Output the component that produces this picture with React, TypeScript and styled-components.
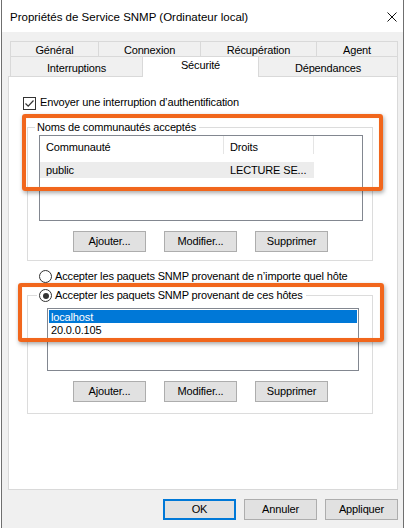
import React from "react";
import styled, { createGlobalStyle } from "styled-components";

const GlobalStyle = createGlobalStyle`
  html, body {
    margin: 0;
    padding: 0;
    background: #ffffff;
  }
  body {
    font-family: "Liberation Sans", Arial, sans-serif;
    font-size: 11px;
    letter-spacing: -0.15px;
    color: #000000;
  }
  *, *::before, *::after {
    box-sizing: border-box;
  }
`;

const Screen = styled.div`
  position: relative;
  width: 407px;
  height: 528px;
  overflow: hidden;
  background: #ffffff;
`;

const Window = styled.div`
  margin-left: 1px;
  width: 403px;
  height: 528px;
  border-left: 1px solid #6f6f6f;
  border-right: 1px solid #6f6f6f;
  background: #f0f0f0;
  display: flex;
  flex-direction: column;
`;

const TitleBar = styled.div`
  height: 32px;
  flex: none;
  background: #ffffff;
  display: flex;
  align-items: center;
  padding: 2px 6px 0 8px;
`;

const TitleText = styled.span`
  font-size: 11.5px;
  letter-spacing: 0;
  line-height: 14px;
  white-space: nowrap;
`;

const CloseButton = styled.span`
  margin-left: auto;
  width: 10px;
  height: 10px;
  display: flex;
  margin-top: -1px;
`;

const Body = styled.div`
  flex: 1;
  display: flex;
  flex-direction: column;
  padding: 9px 5px 0 6px;
`;

const TabStrip = styled.div`
  display: flex;
  flex-direction: column;
  margin-left: 2px;
`;

const TabRow = styled.div<{ $h: number }>`
  display: flex;
  align-items: flex-start;
  height: ${(p) => p.$h}px;
`;

const Tab = styled.div<{ $w: number; $h: number; $pt: number; $active?: boolean }>`
  position: relative;
  z-index: ${(p) => (p.$active ? 2 : 1)};
  width: ${(p) => p.$w}px;
  height: ${(p) => p.$h}px;
  padding-top: ${(p) => p.$pt}px;
  margin-left: -1px;
  border: 1px solid #d9d9d9;
  border-bottom: none;
  background: ${(p) => (p.$active ? "#ffffff" : "#f0f0f0")};
  text-align: center;
  line-height: 13px;
  white-space: nowrap;

  &:first-child {
    margin-left: 0;
  }
`;

const Panel = styled.div`
  height: 414px;
  border: 1px solid #d9d9d9;
  background: #ffffff;
  display: flex;
  flex-direction: column;
  align-items: flex-start;
`;

const CheckRow = styled.label`
  display: flex;
  align-items: center;
  gap: 4px;
  height: 13px;
  margin: 19px 0 0 14px;
  line-height: 13px;
  white-space: nowrap;
`;

const CheckBox = styled.span`
  width: 13px;
  height: 13px;
  border: 1px solid #333333;
  background: #ffffff;
  display: flex;
  align-items: center;
  justify-content: center;
  margin-top: 1px;
`;

const RadioRow = styled.label<{ $mt?: number; $ml?: number }>`
  display: flex;
  align-items: center;
  gap: 3px;
  height: 13px;
  margin: ${(p) => p.$mt ?? 0}px 0 0 ${(p) => p.$ml ?? 0}px;
  line-height: 13px;
  white-space: nowrap;
`;

const Radio = styled.span<{ $checked?: boolean }>`
  position: relative;
  width: 13px;
  height: 13px;
  border: 1px solid #333333;
  border-radius: 50%;
  background: #ffffff;
  flex: none;

  &::after {
    content: "";
    display: ${(p) => (p.$checked ? "block" : "none")};
    position: absolute;
    left: 2.5px;
    top: 2.5px;
    width: 6px;
    height: 6px;
    border-radius: 50%;
    background: #333333;
  }
`;

const Group = styled.fieldset<{ $mt: number; $pt: number; $pb: number }>`
  margin: ${(p) => p.$mt}px 0 0 18px;
  width: 346px;
  min-width: 0;
  padding: ${(p) => p.$pt}px 0 ${(p) => p.$pb}px 11px;
  border: 1px solid #dcdcdc;
  display: flex;
  flex-direction: column;
  align-items: flex-start;
`;

const Caption = styled.legend<{ $ml: number }>`
  margin-left: ${(p) => p.$ml}px;
  padding: 0 3px 0 2px;
  line-height: 13px;
  height: 13px;
  white-space: nowrap;
`;

const ListView = styled.div`
  width: 324px;
  height: 86px;
  border: 1px solid #828790;
  background: #ffffff;
  display: flex;
  flex-direction: column;
`;

const ListHeader = styled.div`
  display: flex;
  height: 18px;
`;

const HeaderCell = styled.div<{ $w: number }>`
  width: ${(p) => p.$w}px;
  height: 18px;
  padding: 5px 0 0 6px;
  border-right: 1px solid #e5e5e5;
  line-height: 13px;
  white-space: nowrap;
`;

const ListRow = styled.div`
  display: flex;
  margin-top: 8px;
  width: 274px;
  height: 16px;
  background: #ececec;
`;

const Cell = styled.div<{ $w: number }>`
  width: ${(p) => p.$w}px;
  padding-left: 6px;
  line-height: 16px;
  white-space: nowrap;
  overflow: hidden;
`;

const ListBox = styled.div`
  margin: 6px 0 0 8px;
  width: 312px;
  height: 63px;
  border: 1px solid #828790;
  background: #ffffff;
  padding: 1px;
  display: flex;
  flex-direction: column;
`;

const ListItem = styled.div<{ $selected?: boolean }>`
  height: 13px;
  padding: 1px 0 0 2px;
  line-height: 12px;
  background: ${(p) => (p.$selected ? "#0078d7" : "transparent")};
  color: ${(p) => (p.$selected ? "#ffffff" : "#000000")};
  white-space: nowrap;
`;

const ButtonRow = styled.div`
  display: flex;
  gap: 18px;
  margin: 10px 0 0 34px;
`;

const Button = styled.button<{ $default?: boolean }>`
  width: 73px;
  height: 21px;
  padding: 0;
  border: ${(p) => (p.$default ? "2px solid #0078d7" : "1px solid #adadad")};
  background: #e1e1e1;
  font-family: inherit;
  font-size: 11px;
  letter-spacing: -0.15px;
  line-height: ${(p) => (p.$default ? 17 : 19)}px;
  color: #000000;
  text-align: center;
`;

const Footer = styled.div`
  display: flex;
  justify-content: flex-end;
  gap: 8px;
  margin-top: 9px;
`;

const Highlight = styled.div<{ $x: number; $y: number; $w: number; $h: number }>`
  position: absolute;
  left: ${(p) => p.$x}px;
  top: ${(p) => p.$y}px;
  width: ${(p) => p.$w}px;
  height: ${(p) => p.$h}px;
  border: 4px solid #f1661c;
  border-radius: 3px;
  box-shadow: 1px 2px 4px rgba(0, 0, 0, 0.35), inset 0 0 1px rgba(255, 190, 110, 0.7);
  pointer-events: none;
`;

const CloseIcon = () => (
  <svg width="10" height="10" viewBox="0 0 10 10">
    <path d="M0.5 0.5 L9.5 9.5 M9.5 0.5 L0.5 9.5" stroke="#111" strokeWidth="1" fill="none" />
  </svg>
);

const CheckMark = () => (
  <svg width="11" height="11" viewBox="0 0 11 11">
    <path d="M1.5 5.5 L4.2 8.2 L9.5 2.5" stroke="#333" strokeWidth="1.2" fill="none" />
  </svg>
);

const topTabs = [
  { label: "Général", w: 89 },
  { label: "Connexion", w: 103 },
  { label: "Récupération", w: 117 },
  { label: "Agent", w: 82 },
];

const bottomTabs = [
  { label: "Interruptions", w: 133 },
  { label: "Sécurité", w: 117, active: true },
  { label: "Dépendances", w: 140 },
];

const ListActions = () => (
  <ButtonRow>
    <Button>Ajouter...</Button>
    <Button>Modifier...</Button>
    <Button>Supprimer</Button>
  </ButtonRow>
);

export default function App() {
  return (
    <Screen>
      <GlobalStyle />
      <Window>
        <TitleBar>
          <TitleText>Propriétés de Service SNMP (Ordinateur local)</TitleText>
          <CloseButton>
            <CloseIcon />
          </CloseButton>
        </TitleBar>
        <Body>
          <TabStrip>
            <TabRow $h={15}>
              {topTabs.map((t) => (
                <Tab key={t.label} $w={t.w} $h={19} $pt={2}>
                  {t.label}
                </Tab>
              ))}
            </TabRow>
            <TabRow $h={20}>
              {bottomTabs.map((t) => (
                <Tab key={t.label} $w={t.w} $h={t.active ? 21 : 20} $pt={t.active ? 2 : 5} $active={t.active}>
                  {t.label}
                </Tab>
              ))}
            </TabRow>
          </TabStrip>
          <Panel>
            <CheckRow>
              <CheckBox>
                <CheckMark />
              </CheckBox>
              <span>Envoyer une interruption d’authentification</span>
            </CheckRow>

            <Group $mt={12} $pt={1} $pb={8}>
              <Caption $ml={-4}>Noms de communautés acceptés</Caption>
              <ListView>
                <ListHeader>
                  <HeaderCell $w={184}>Communauté</HeaderCell>
                  <HeaderCell $w={90}>Droits</HeaderCell>
                </ListHeader>
                <ListRow>
                  <Cell $w={184}>public</Cell>
                  <Cell $w={90}>LECTURE SE...</Cell>
                </ListRow>
              </ListView>
              <ListActions />
            </Group>

            <RadioRow $mt={9} $ml={30}>
              <Radio />
              <span>Accepter les paquets SNMP provenant de n’importe quel hôte</span>
            </RadioRow>

            <Group $mt={6} $pt={0} $pb={11}>
              <Caption $ml={-2}>
                <RadioRow>
                  <Radio $checked />
                  <span>Accepter les paquets SNMP provenant de ces hôtes</span>
                </RadioRow>
              </Caption>
              <ListBox>
                <ListItem $selected>localhost</ListItem>
                <ListItem>20.0.0.105</ListItem>
              </ListBox>
              <ListActions />
            </Group>
          </Panel>
          <Footer>
            <Button $default>OK</Button>
            <Button>Annuler</Button>
            <Button>Appliquer</Button>
          </Footer>
        </Body>
      </Window>
      <Highlight $x={22} $y={114} $w={361} $h={77} />
      <Highlight $x={18} $y={283} $w={366} $h={59} />
    </Screen>
  );
}
